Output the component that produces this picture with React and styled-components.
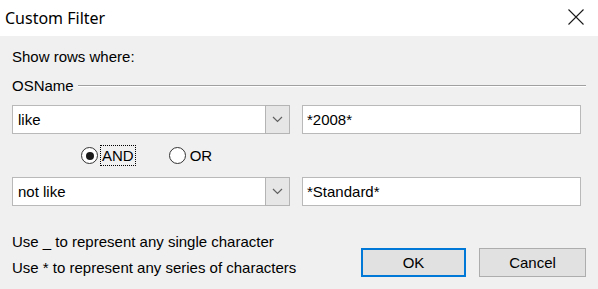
import React, {useState} from 'react'
import styled, {createGlobalStyle} from 'styled-components'

const GlobalStyle = createGlobalStyle`
  html, body {
    margin: 0;
    padding: 0;
    background: #f0f0f0;
  }
  * { box-sizing: border-box; }
`

const conditions = [
    {op: 'like', value: '*2008*'},
    {op: 'not like', value: '*Standard*'},
]

const Combo = ({value}) => (
    <ComboBox>
        <ComboText>{value}</ComboText>
        <DropButton>
            <svg width="11" height="7" viewBox="0 0 11 7">
                <path d="M1 1 L5.5 5.5 L10 1" fill="none" stroke="#606060" strokeWidth="1.2" />
            </svg>
        </DropButton>
    </ComboBox>
)

const App = () => {
    const [joiner, setJoiner] = useState('AND')

    return (
        <Window>
            <GlobalStyle />
            <TitleBar>
                <Title>Custom Filter</Title>
                <CloseButton aria-label="Close">
                    <svg width="16" height="16" viewBox="0 0 16 16">
                        <path d="M0.5 0.5 L15.5 15.5 M15.5 0.5 L0.5 15.5" stroke="#1a1a1a" strokeWidth="1.1" />
                    </svg>
                </CloseButton>
            </TitleBar>
            <Body>
                <Label>Show rows where:</Label>
                <GroupHeader>
                    <Label>OSName</Label>
                    <Rule />
                </GroupHeader>

                <ConditionRow>
                    <Combo value={conditions[0].op} />
                    <TextBox>{conditions[0].value}</TextBox>
                </ConditionRow>

                <RadioRow>
                    {['AND', 'OR'].map(opt => (
                        <RadioOption key={opt} onClick={() => setJoiner(opt)}>
                            <RadioCircle checked={joiner === opt} />
                            <RadioLabel focused={joiner === opt}>{opt}</RadioLabel>
                        </RadioOption>
                    ))}
                </RadioRow>

                <ConditionRow>
                    <Combo value={conditions[1].op} />
                    <TextBox>{conditions[1].value}</TextBox>
                </ConditionRow>

                <Footer>
                    <HelpText>
                        <Label>Use _ to represent any single character</Label>
                        <Label>Use * to represent any series of characters</Label>
                    </HelpText>
                    <Buttons>
                        <Button primary>OK</Button>
                        <Button wide>Cancel</Button>
                    </Buttons>
                </Footer>
            </Body>
        </Window>
    )
}

export default App

const Window = styled.div`
width: 598px;
height: 289px;
background: #f0f0f0;
font-family: "Liberation Sans", Arial, sans-serif;
font-size: 15px;
color: #000;
overflow: hidden;
`
const TitleBar = styled.div`
height: 36px;
background: #fff;
display: flex;
align-items: center;
justify-content: space-between;
padding: 0 14px 0 5px;
`
const Title = styled.span`
font-family: "Noto Sans", "Open Sans", sans-serif;
font-size: 16px;
color: #000;
margin-top: -1px;
`
const CloseButton = styled.div`
width: 16px;
height: 16px;
display: flex;
margin-top: -2px;
`
const Body = styled.div`
padding: 12px 12px 0 12px;
`
const Label = styled.div`
line-height: 17px;
white-space: nowrap;
`
const GroupHeader = styled.div`
display: flex;
align-items: center;
gap: 4px;
margin-top: 12px;
`
const Rule = styled.div`
flex: 1;
height: 2px;
border-top: 1px solid #a0a0a0;
border-bottom: 1px solid #fff;
margin-top: 1px;
`
const ConditionRow = styled.div`
display: grid;
grid-template-columns: 278px 279px;
column-gap: 12px;
height: 29px;
margin-top: 11px;
`
const ComboBox = styled.div`
display: flex;
background: #fff;
border: 1px solid #b9b9b9;
`
const ComboText = styled.div`
flex: 1;
padding-left: 5px;
line-height: 27px;
`
const DropButton = styled.div`
width: 25px;
margin: -1px -1px -1px 0;
background: #e6e6e6;
border: 1px solid #b4b4b4;
display: flex;
align-items: center;
justify-content: center;
`
const TextBox = styled.div`
background: #fff;
border: 1px solid #b9b9b9;
padding-left: 4px;
line-height: 27px;
`
const RadioRow = styled.div`
display: flex;
align-items: center;
gap: 34px;
height: 21px;
margin: 11px 0 0 69px;
`
const RadioOption = styled.div`
display: flex;
align-items: center;
gap: 3px;
cursor: default;
`
const RadioCircle = styled.span`
width: 17px;
height: 17px;
border-radius: 50%;
border: 1px solid #333;
background: #fff;
display: flex;
align-items: center;
justify-content: center;
&::after {
    content: "";
    width: 8px;
    height: 8px;
    border-radius: 50%;
    background: ${props => props.checked ? '#1a1a1a' : 'transparent'};
}
`
const RadioLabel = styled.span`
line-height: 19px;
padding: 0 1px;
outline: ${props => props.focused ? '1px dotted #000' : 'none'};
`
const Footer = styled.div`
display: flex;
justify-content: space-between;
align-items: flex-end;
margin-top: 27px;
`
const HelpText = styled.div`
display: flex;
flex-direction: column;
gap: 9px;
`
const Buttons = styled.div`
display: flex;
gap: 13px;
margin-bottom: -1px;
`
const Button = styled.div`
width: ${props => props.wide ? '107px' : '105px'};
height: 29px;
background: #e1e1e1;
border: ${props => props.primary ? '2px solid #0078d7' : '1px solid #adadad'};
display: flex;
align-items: center;
justify-content: center;
`
